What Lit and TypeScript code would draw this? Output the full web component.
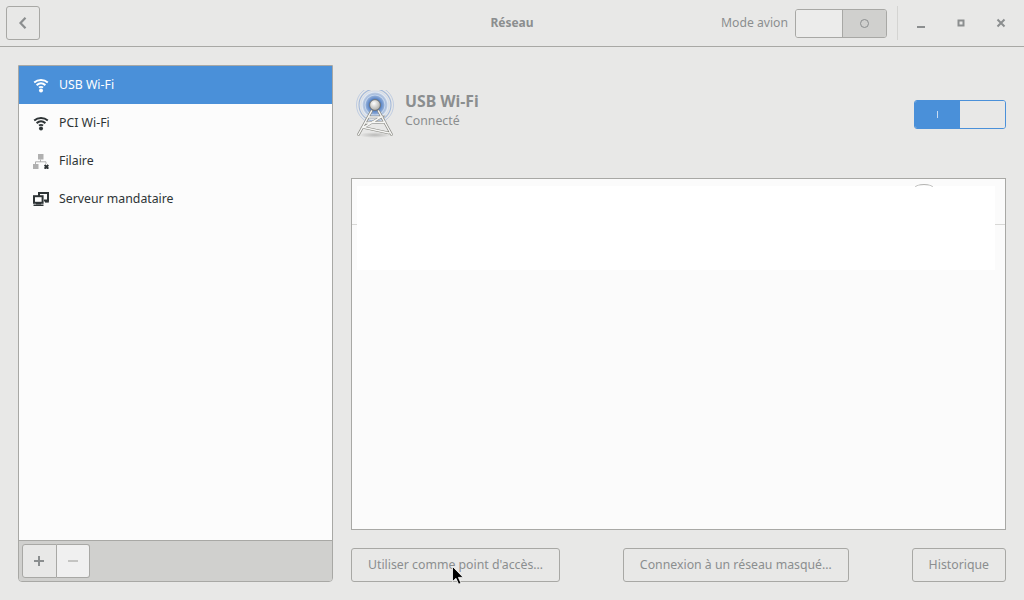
import { LitElement, html, css, svg } from "lit";
import { customElement } from "lit/decorators.js";

const wifi = svg`<svg class="ico" width="16" height="16" viewBox="0 0 16 16" fill="none" stroke="currentColor" stroke-linecap="butt">
<path d="M1.2 5.4C5 2.2 11 2.2 14.8 5.4" stroke-width="2"/>
<path d="M3.6 8.1C6.2 6 9.8 6 12.4 8.1" stroke-width="2"/>
<path d="M5.9 10.6C7.1 9.8 8.9 9.8 10.1 10.6" stroke-width="1.8"/>
<circle cx="8" cy="13.4" r="2" fill="currentColor" stroke="none"/></svg>`;

const wired = svg`<svg class="ico" width="16" height="16" viewBox="0 0 16 16" fill="none">
<rect x="5" y="1" width="5.5" height="5.5" fill="#b0b0b0"/>
<rect x="0" y="11" width="5.5" height="5" fill="#b0b0b0"/>
<path d="M7.5 6.5V9M2.5 11V8.8H13V11" stroke="#b0b0b0" stroke-width="1"/>
<path d="M11.6 12L15.3 15.7M15.3 12L11.6 15.7" stroke="#2e3436" stroke-width="2"/></svg>`;

const proxy = svg`<svg class="ico" width="16" height="16" viewBox="0 0 16 16" fill="none">
<path d="M6 5V2H15V9.6H11" stroke="#2e3436" stroke-width="2"/>
<rect x="1" y="5.2" width="8.6" height="6.6" fill="#fdfdfd" stroke="#2e3436" stroke-width="2"/>
<rect x="3" y="12" width="5" height="1.5" fill="#2e3436"/>
<rect x="0.5" y="13.5" width="10" height="1.5" fill="#2e3436"/>
<rect x="12" y="9" width="3.8" height="2.6" fill="#2e3436"/></svg>`;

const tower = svg`<svg width="42" height="48" viewBox="0 0 42 48" fill="none">
<defs>
<radialGradient id="glow" cx="0.5" cy="0.5" r="0.5">
<stop offset="0.35" stop-color="#3f72c0" stop-opacity="0.95"/>
<stop offset="0.75" stop-color="#7fa3d8" stop-opacity="0.55"/>
<stop offset="1" stop-color="#a9bfdf" stop-opacity="0.1"/>
</radialGradient>
<radialGradient id="ball" cx="0.4" cy="0.35" r="0.7">
<stop offset="0" stop-color="#ffffff"/>
<stop offset="1" stop-color="#a8a8a4"/>
</radialGradient>
<radialGradient id="shadow" cx="0.5" cy="0.5" r="0.5">
<stop offset="0" stop-color="#9a9a98" stop-opacity="0.6"/>
<stop offset="1" stop-color="#9a9a98" stop-opacity="0"/>
</radialGradient>
</defs>
<ellipse cx="21" cy="45" rx="16" ry="3" fill="url(#shadow)"/>
<circle cx="21" cy="15" r="15" fill="url(#glow)"/>
<circle cx="21" cy="15" r="10" stroke="#c8d8ee" stroke-width="1.1" opacity="0.9"/>
<circle cx="21" cy="15" r="13" stroke="#e3ebf6" stroke-width="1.2" opacity="0.9"/>
<circle cx="21" cy="15" r="16" stroke="#8aa7d4" stroke-width="1.1" opacity="0.75"/>
<circle cx="21" cy="15" r="18.5" stroke="#a5bbdd" stroke-width="1" opacity="0.6"/>
<path d="M17.5 21L4.5 44.5M24.5 21L37.5 44.5M14.5 27H27L9.5 37.5L35 43M12 33L31 32" stroke="#85857f" stroke-width="2.6" stroke-linecap="round"/>
<path d="M17.5 21L4.5 44.5M24.5 21L37.5 44.5M14.5 27H27L9.5 37.5L35 43M12 33L31 32" stroke="#f6f6f4" stroke-width="1.5" stroke-linecap="round"/>
<circle cx="21" cy="15" r="5.4" fill="url(#ball)" stroke="#6f6f6c" stroke-width="0.9"/>
</svg>`;

@customElement("app-root")
export class AppRoot extends LitElement {
  static styles = css`
    :host {
      display: flex;
      flex-direction: column;
      position: relative;
      width: 1024px;
      height: 600px;
      overflow: hidden;
      background: #e8e8e7;
      font-family: "Noto Sans", sans-serif;
      font-size: 12.3px;
      color: #2e3436;
    }
    .titlebar {
      height: 46px;
      flex: none;
      border-bottom: 1px solid #a8a8a5;
      display: grid;
      grid-template-columns: 1fr auto 1fr;
      align-items: center;
      background: #e8e8e7;
    }
    .tb-left { padding-left: 6px; display: flex; }
    .back {
      width: 34px;
      height: 34px;
      box-sizing: border-box;
      border: 1px solid #a8a8a5;
      border-radius: 3px;
      display: flex;
      align-items: center;
      justify-content: center;
    }
    .title { font-weight: 700; color: #8b8e8f; font-size: 12px; padding-bottom: 2px; }
    .tb-right { display: flex; align-items: center; justify-content: flex-end; }
    .mode { color: #8b8e8f; font-size: 12.2px; margin-right: 7px; padding-bottom: 2px; }
    .switch {
      width: 92px;
      height: 29px;
      box-sizing: border-box;
      border: 1px solid #a8a8a5;
      border-radius: 3px;
      display: flex;
      overflow: hidden;
    }
    .switch.off .knob { width: 46px; background: #ececeb; border-right: 1px solid #a8a8a5; flex: none; }
    .switch.off .side { flex: 1; background: #d0d0ce; display: flex; align-items: center; justify-content: center; }
    .circle { width: 7px; height: 7px; border: 1px solid #8b8e8f; border-radius: 50%; }
    .sep { width: 1px; height: 34px; background: #d4d4d2; margin-left: 10px; margin-right: 3px; }
    .wbtn { width: 40px; height: 34px; display: flex; align-items: center; justify-content: center; }
    .wbtn:last-child { margin-right: 3px; }
    .content {
      flex: 1;
      min-height: 0;
      display: flex;
      gap: 18px;
      padding: 18px;
    }
    .left {
      width: 315px;
      flex: none;
      box-sizing: border-box;
      border: 1px solid #a8a8a5;
      border-radius: 0 0 4px 4px;
      display: flex;
      flex-direction: column;
      overflow: hidden;
    }
    .list { flex: 1; background: #fcfcfc; }
    .row {
      height: 38px;
      display: flex;
      align-items: center;
      padding-left: 14px;
      gap: 10px;
      color: #2e3436;
    }
    .row span { padding-bottom: 2px; }
    .row.sel { background: #4a90d9; color: #fff; }
    .ico { flex: none; display: block; }
    .toolbar {
      flex: none;
      height: 41px;
      box-sizing: border-box;
      border-top: 1px solid #a8a8a5;
      background: #d0d0ce;
      padding: 3px;
      display: flex;
    }
    .tool {
      height: 34px;
      box-sizing: border-box;
      border: 1px solid #a8a8a5;
      display: flex;
      align-items: center;
      justify-content: center;
    }
    .tool.add { width: 35px; padding-right: 1px; background: #e8e8e7; border-radius: 3px 0 0 3px; }
    .tool.rm { width: 33px; background: #f0f0f0; border-left: 0; border-radius: 0 3px 3px 0; }
    .right { flex: 1; min-width: 0; display: flex; flex-direction: column; }
    .head {
      flex: none;
      height: 113px;
      box-sizing: border-box;
      padding: 25px 0 40px 3px;
      display: flex;
      align-items: center;
      gap: 9px;
    }
    .head-text { flex: 1; display: flex; flex-direction: column; gap: 1px; margin-top: -9px; }
    .name { font-size: 15.8px; font-weight: 700; color: #8b8e8f; line-height: 20px; }
    .state { font-size: 12.3px; color: #8b8e8f; line-height: 17px; }
    .switch.on { border-color: #4a90d9; }
    .switch.on .side { width: 45px; flex: none; background: #4a90d9; display: flex; align-items: center; justify-content: center; }
    .switch.on .knob { flex: 1; background: #e8e8e7; }
    .bar { width: 1px; height: 7px; background: #c9dcf2; }
    .frame {
      flex: 1;
      min-height: 0;
      box-sizing: border-box;
      border: 1px solid #a8a8a5;
      background: #fbfbfb;
      position: relative;
      margin-bottom: 18px;
    }
    .inner { position: absolute; left: 5px; top: 7px; width: 638px; height: 84px; background: #ffffff; }
    .tick { position: absolute; top: 45px; height: 1px; background: #d8d8d6; }
    .tick.l { left: 0; width: 5px; }
    .tick.r { right: 0; width: 10px; }
    .arc {
      position: absolute;
      left: 563px;
      top: 5px;
      width: 18px;
      height: 3px;
      box-sizing: border-box;
      border: 1px solid #b4b4b2;
      border-bottom: 0;
      border-radius: 9px 9px 0 0 / 3px 3px 0 0;
    }
    .actions { flex: none; display: flex; justify-content: space-between; }
    .btn {
      height: 34px;
      box-sizing: border-box;
      border: 1px solid #a8a8a5;
      border-radius: 3px;
      padding: 0 16px 2px 16px;
      display: flex;
      align-items: center;
      color: #8b8e8f;
    }
    .cursor { position: absolute; left: 452px; top: 566px; }
  `;

  render() {
    return html`
      <div class="titlebar">
        <div class="tb-left">
          <div class="back">
            <svg width="16" height="16" viewBox="0 0 16 16" fill="none"><path d="M10.5 2.8L5.5 8L10.5 13.2" stroke="#8b8e8f" stroke-width="2.2"/></svg>
          </div>
        </div>
        <div class="title">Réseau</div>
        <div class="tb-right">
          <span class="mode">Mode avion</span>
          <div class="switch off"><div class="knob"></div><div class="side"><div class="circle"></div></div></div>
          <div class="sep"></div>
          <div class="wbtn"><svg width="16" height="16" viewBox="0 0 16 16"><rect x="4" y="11" width="8" height="2" fill="#8b8e8f"/></svg></div>
          <div class="wbtn"><svg width="16" height="16" viewBox="0 0 16 16" fill="none"><rect x="5.5" y="5.5" width="5" height="5" stroke="#8b8e8f" stroke-width="2"/></svg></div>
          <div class="wbtn"><svg width="16" height="16" viewBox="0 0 16 16" fill="none"><path d="M4.5 4.5L11.5 11.5M11.5 4.5L4.5 11.5" stroke="#8b8e8f" stroke-width="2"/></svg></div>
        </div>
      </div>
      <div class="content">
        <div class="left">
          <div class="list">
            <div class="row sel">${wifi}<span>USB Wi-Fi</span></div>
            <div class="row">${wifi}<span>PCI Wi-Fi</span></div>
            <div class="row">${wired}<span>Filaire</span></div>
            <div class="row">${proxy}<span>Serveur mandataire</span></div>
          </div>
          <div class="toolbar">
            <div class="tool add"><svg width="16" height="16" viewBox="0 0 16 16"><path d="M3 7h4V3h2v4h4v2H9v4H7V9H3z" fill="#8b8e8f"/></svg></div>
            <div class="tool rm"><svg width="16" height="16" viewBox="0 0 16 16"><rect x="3" y="7" width="10" height="2" fill="#c4c4c2"/></svg></div>
          </div>
        </div>
        <div class="right">
          <div class="head">
            ${tower}
            <div class="head-text">
              <div class="name">USB Wi-Fi</div>
              <div class="state">Connecté</div>
            </div>
            <div class="switch on"><div class="side"><div class="bar"></div></div><div class="knob"></div></div>
          </div>
          <div class="frame">
            <div class="inner"></div>
            <div class="tick l"></div>
            <div class="tick r"></div>
            <div class="arc"></div>
          </div>
          <div class="actions">
            <div class="btn">Utiliser comme point d'accès…</div>
            <div class="btn">Connexion à un réseau masqué…</div>
            <div class="btn">Historique</div>
          </div>
        </div>
      </div>
      <svg class="cursor" width="14" height="20" viewBox="0 0 14 20">
        <path d="M0.5 0.5V15.5L4 12.3L6.6 18.2L9 17.2L6.4 11.4H11.2Z" fill="#000" stroke="#fff" stroke-width="0.8"/>
      </svg>
    `;
  }
}
